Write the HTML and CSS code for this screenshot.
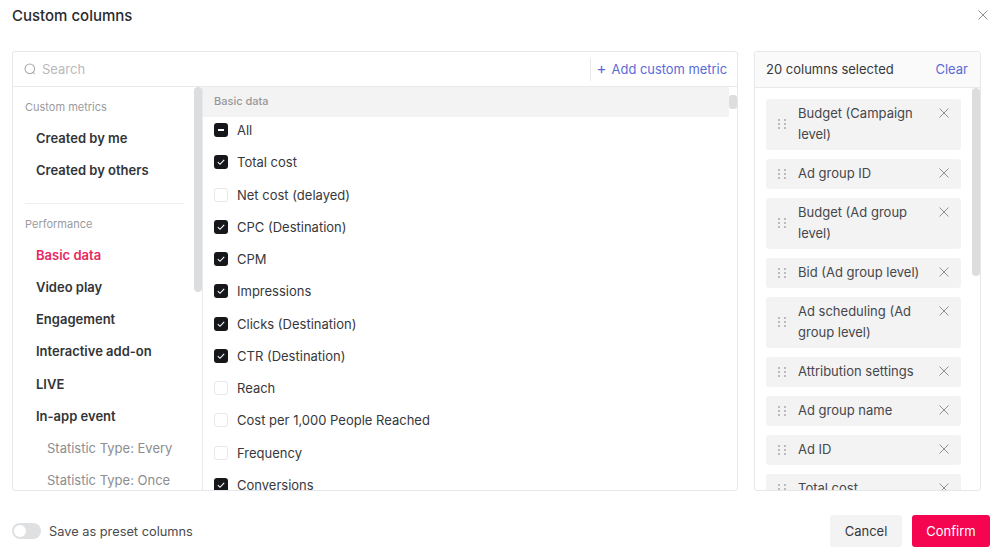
FILE: index.html
```html
<!DOCTYPE html>
<html lang="en">
<head>
  <meta charset="UTF-8" />
  <title>Custom columns</title>
  <link rel="stylesheet" href="styles.css">
</head>
<body>
  <svg class="icon-defs" width="0" height="0">
    <symbol id="x" viewBox="0 0 12 12"><path d="M1.5 1.5l9 9M10.5 1.5l-9 9" fill="none" stroke="currentColor" stroke-width="1"/></symbol>
    <symbol id="grip" viewBox="0 0 8 10"><g fill="currentColor"><circle cx="1" cy="1" r="1"/><circle cx="7" cy="1" r="1"/><circle cx="1" cy="5" r="1"/><circle cx="7" cy="5" r="1"/><circle cx="1" cy="9" r="1"/><circle cx="7" cy="9" r="1"/></g></symbol>
    <symbol id="tick" viewBox="0 0 14 14"><path d="M3.8 7.2l2.2 2.1 4.2-4.4" fill="none" stroke="#fff" stroke-width="1.1"/></symbol>
  </svg>

  <div class="dialog">
    <div class="dialog-head">
      <h1>Custom columns</h1>
      <svg class="close"><use href="#x"/></svg>
    </div>

    <div class="dialog-body">
      <!-- Metric picker -->
      <div class="panel picker">
        <div class="picker-head">
          <svg class="search-icon" viewBox="0 0 14 14"><circle cx="6.8" cy="6.8" r="4.8" fill="none" stroke="currentColor" stroke-width="1.1"/><path d="M10 10.4l1.6 1.4" fill="none" stroke="currentColor" stroke-width="1.1"/></svg>
          <span class="search-text">Search</span>
          <span class="add-metric"><span class="plus">+</span>Add custom metric</span>
        </div>
        <div class="picker-body">
          <div class="nav">
            <div class="nav-title">Custom metrics</div>
            <div class="nav-item">Created by me</div>
            <div class="nav-item">Created by others</div>
            <div class="nav-divider"></div>
            <div class="nav-title">Performance</div>
            <div class="nav-item active">Basic data</div>
            <div class="nav-item">Video play</div>
            <div class="nav-item">Engagement</div>
            <div class="nav-item">Interactive add-on</div>
            <div class="nav-item">LIVE</div>
            <div class="nav-item">In-app event</div>
            <div class="nav-sub">Statistic Type: Every</div>
            <div class="nav-sub">Statistic Type: Once</div>
            <div class="scroll-thumb nav-thumb"></div>
          </div>
          <div class="metrics">
            <div class="metrics-title">Basic data</div>
            <div class="metric"><span class="check on"><span class="dash"></span></span>All</div>
            <div class="metric"><span class="check on"><svg><use href="#tick"/></svg></span>Total cost</div>
            <div class="metric"><span class="check"></span>Net cost (delayed)</div>
            <div class="metric"><span class="check on"><svg><use href="#tick"/></svg></span>CPC (Destination)</div>
            <div class="metric"><span class="check on"><svg><use href="#tick"/></svg></span>CPM</div>
            <div class="metric"><span class="check on"><svg><use href="#tick"/></svg></span>Impressions</div>
            <div class="metric"><span class="check on"><svg><use href="#tick"/></svg></span>Clicks (Destination)</div>
            <div class="metric"><span class="check on"><svg><use href="#tick"/></svg></span>CTR (Destination)</div>
            <div class="metric"><span class="check"></span>Reach</div>
            <div class="metric"><span class="check"></span>Cost per 1,000 People Reached</div>
            <div class="metric"><span class="check"></span>Frequency</div>
            <div class="metric"><span class="check on"><svg><use href="#tick"/></svg></span>Conversions</div>
            <div class="metrics-thumb"></div>
          </div>
        </div>
      </div>

      <!-- Selected columns -->
      <div class="panel selected">
        <div class="selected-head">
          <span>20 columns selected</span>
          <span class="clear">Clear</span>
        </div>
        <div class="selected-list">
          <div class="chip"><svg class="grip"><use href="#grip"/></svg><span class="chip-text">Budget (Campaign level)</span><svg class="chip-x"><use href="#x"/></svg></div>
          <div class="chip"><svg class="grip"><use href="#grip"/></svg><span class="chip-text">Ad group ID</span><svg class="chip-x"><use href="#x"/></svg></div>
          <div class="chip"><svg class="grip"><use href="#grip"/></svg><span class="chip-text">Budget (Ad group level)</span><svg class="chip-x"><use href="#x"/></svg></div>
          <div class="chip"><svg class="grip"><use href="#grip"/></svg><span class="chip-text">Bid (Ad group level)</span><svg class="chip-x"><use href="#x"/></svg></div>
          <div class="chip"><svg class="grip"><use href="#grip"/></svg><span class="chip-text">Ad scheduling (Ad group level)</span><svg class="chip-x"><use href="#x"/></svg></div>
          <div class="chip"><svg class="grip"><use href="#grip"/></svg><span class="chip-text">Attribution settings</span><svg class="chip-x"><use href="#x"/></svg></div>
          <div class="chip"><svg class="grip"><use href="#grip"/></svg><span class="chip-text">Ad group name</span><svg class="chip-x"><use href="#x"/></svg></div>
          <div class="chip"><svg class="grip"><use href="#grip"/></svg><span class="chip-text">Ad ID</span><svg class="chip-x"><use href="#x"/></svg></div>
          <div class="chip"><svg class="grip"><use href="#grip"/></svg><span class="chip-text">Total cost</span><svg class="chip-x"><use href="#x"/></svg></div>
          <div class="scroll-thumb selected-thumb"></div>
        </div>
      </div>
    </div>

    <div class="dialog-foot">
      <span class="toggle"><span class="knob"></span></span>
      <span class="toggle-label">Save as preset columns</span>
      <button class="btn btn-cancel">Cancel</button>
      <button class="btn btn-confirm">Confirm</button>
    </div>
  </div>
</body>
</html>
```

FILE: styles.css
```css
html, body {
  margin: 0;
  height: 100%;
  overflow: hidden;
}

body {
  font-family: Inter, "Liberation Sans", sans-serif;
  font-size: 13px;
  color: #37383b;
  background: #fff;
}

.icon-defs {
  display: block;
  position: absolute;
}

.dialog {
  width: 1000px;
  height: 556px;
  box-sizing: border-box;
  padding: 0 10px 0 12px;
}

/* Header */
.dialog-head {
  height: 51px;
  display: flex;
  justify-content: space-between;
  padding: 6px 1px 0 0;
  box-sizing: border-box;
}

.dialog-head h1 {
  margin: 0;
  font-size: 15px;
  line-height: 20px;
  font-weight: 500;
  color: #2a2b2e;
}

.close {
  width: 12px;
  height: 12px;
  margin-top: 3px;
  color: #8f9194;
}

.dialog-body {
  display: flex;
  gap: 16px;
  width: 969px;
  height: 440px;
}

.panel {
  box-sizing: border-box;
  border: 1px solid #e6e7e8;
  border-radius: 3px;
  overflow: hidden;
  background: #fff;
}

/* Metric picker */
.picker {
  width: 726px;
  display: flex;
  flex-direction: column;
}

.picker-head {
  height: 35px;
  flex: none;
  display: flex;
  align-items: center;
  padding: 0 10px;
  border-bottom: 1px solid #e8e9ea;
  box-sizing: border-box;
}

.search-icon {
  width: 14px;
  height: 14px;
  color: #a8aaad;
}

.search-text {
  margin-left: 5px;
  color: #b9babd;
  flex: 1;
}

.add-metric {
  color: #5a6bd8;
  border-left: 1px solid #e6e7e8;
  padding-left: 6px;
  line-height: 22px;
  font-size: 12.9px;
}

.plus {
  display: inline-block;
  width: 10px;
  margin-right: 5px;
  font-size: 15px;
}

.picker-body {
  flex: 1;
  display: flex;
  min-height: 0;
}

.nav {
  position: relative;
  width: 190px;
  flex: none;
  box-sizing: border-box;
  padding: 10px 0 0 12px;
  border-right: 1px solid #e8e9ea;
  overflow: hidden;
}

.nav-title {
  font-size: 11px;
  line-height: 20px;
  color: #9a9b9e;
  margin-bottom: 5px;
}

.nav-item {
  height: 32.25px;
  line-height: 32.25px;
  padding-left: 11px;
  font-weight: 600;
  color: #333437;
}

.nav-item.active {
  color: #e8275f;
}

.nav-sub {
  height: 32.25px;
  line-height: 32.25px;
  padding-left: 22px;
  color: #8c8d90;
}

.nav-divider {
  width: 159px;
  height: 1px;
  background: #eeeff0;
  margin: 16px 0 10px;
}

.scroll-thumb {
  position: absolute;
  background: #dcddde;
  border-radius: 4px;
}

.nav-thumb {
  top: 0;
  right: 0;
  width: 8px;
  height: 205px;
}

.metrics {
  position: relative;
  flex: 1;
  min-width: 0;
  overflow: hidden;
}

.metrics-title {
  width: 526px;
  height: 30px;
  line-height: 29px;
  margin-bottom: -3px;
  padding-left: 11px;
  box-sizing: border-box;
  background: #f3f3f4;
  font-size: 11px;
  font-weight: 500;
  color: #97989b;
}

.metrics-thumb {
  position: absolute;
  top: 8px;
  right: 0;
  width: 8px;
  height: 14px;
  border-radius: 3px;
  background: #dcddde;
}

.metric {
  height: 32.25px;
  display: flex;
  align-items: center;
  padding-left: 11px;
}

.check {
  width: 14px;
  height: 14px;
  flex: none;
  margin-right: 9px;
  box-sizing: border-box;
  border: 1px solid #e6e7e8;
  border-radius: 3px;
  display: flex;
  align-items: center;
  justify-content: center;
}

.check.on {
  border: none;
  background: #16171a;
}

.check svg {
  width: 14px;
  height: 14px;
}

.dash {
  width: 6px;
  height: 1.5px;
  background: #fff;
}

/* Selected columns */
.selected {
  width: 227px;
  display: flex;
  flex-direction: column;
}

.selected-head {
  height: 36px;
  flex: none;
  box-sizing: border-box;
  display: flex;
  align-items: center;
  justify-content: space-between;
  padding: 0 12px 2px 11px;
  background: #fafafa;
  border-bottom: 1px solid #e8e9ea;
}

.clear {
  color: #5a6bd8;
}

.selected-list {
  position: relative;
  flex: 1;
  min-height: 0;
  overflow: hidden;
  padding: 11px 19px 0 11px;
  display: flex;
  flex-direction: column;
  gap: 9px;
}

.selected-thumb {
  top: 0;
  right: 0;
  width: 8px;
  height: 188px;
}

.chip {
  flex: none;
  min-height: 30px;
  display: flex;
  align-items: center;
  box-sizing: border-box;
  padding: 4px 8px 5px 12px;
  background: #f3f3f4;
  border-radius: 3px;
  line-height: 21px;
  color: #46474a;
}

.grip {
  width: 8px;
  height: 10px;
  flex: none;
  margin-right: 12px;
  color: #a8a9ac;
}

.chip-text {
  flex: 1;
}

.chip-x {
  width: 12px;
  height: 12px;
  flex: none;
  align-self: flex-start;
  margin: 4px 3px 0 12px;
  color: #8f9194;
}

/* Footer */
.dialog-foot {
  display: flex;
  align-items: center;
  padding-top: 24px;
}

.toggle {
  position: relative;
  width: 29px;
  height: 16px;
  border-radius: 8px;
  background: #dfe0e1;
}

.knob {
  position: absolute;
  left: 2px;
  top: 2px;
  width: 12px;
  height: 12px;
  border-radius: 50%;
  background: #fff;
}

.toggle-label {
  margin-left: 8px;
  flex: 1;
  font-size: 12.8px;
  color: #4a4b4e;
}

.btn {
  height: 32px;
  border: none;
  border-radius: 3px;
  font-family: inherit;
  font-size: 13px;
}

.btn-cancel {
  width: 72px;
  background: #f3f3f4;
  color: #37383b;
}

.btn-confirm {
  width: 78px;
  margin-left: 10px;
  background: #f5054f;
  color: #fff;
}
```
